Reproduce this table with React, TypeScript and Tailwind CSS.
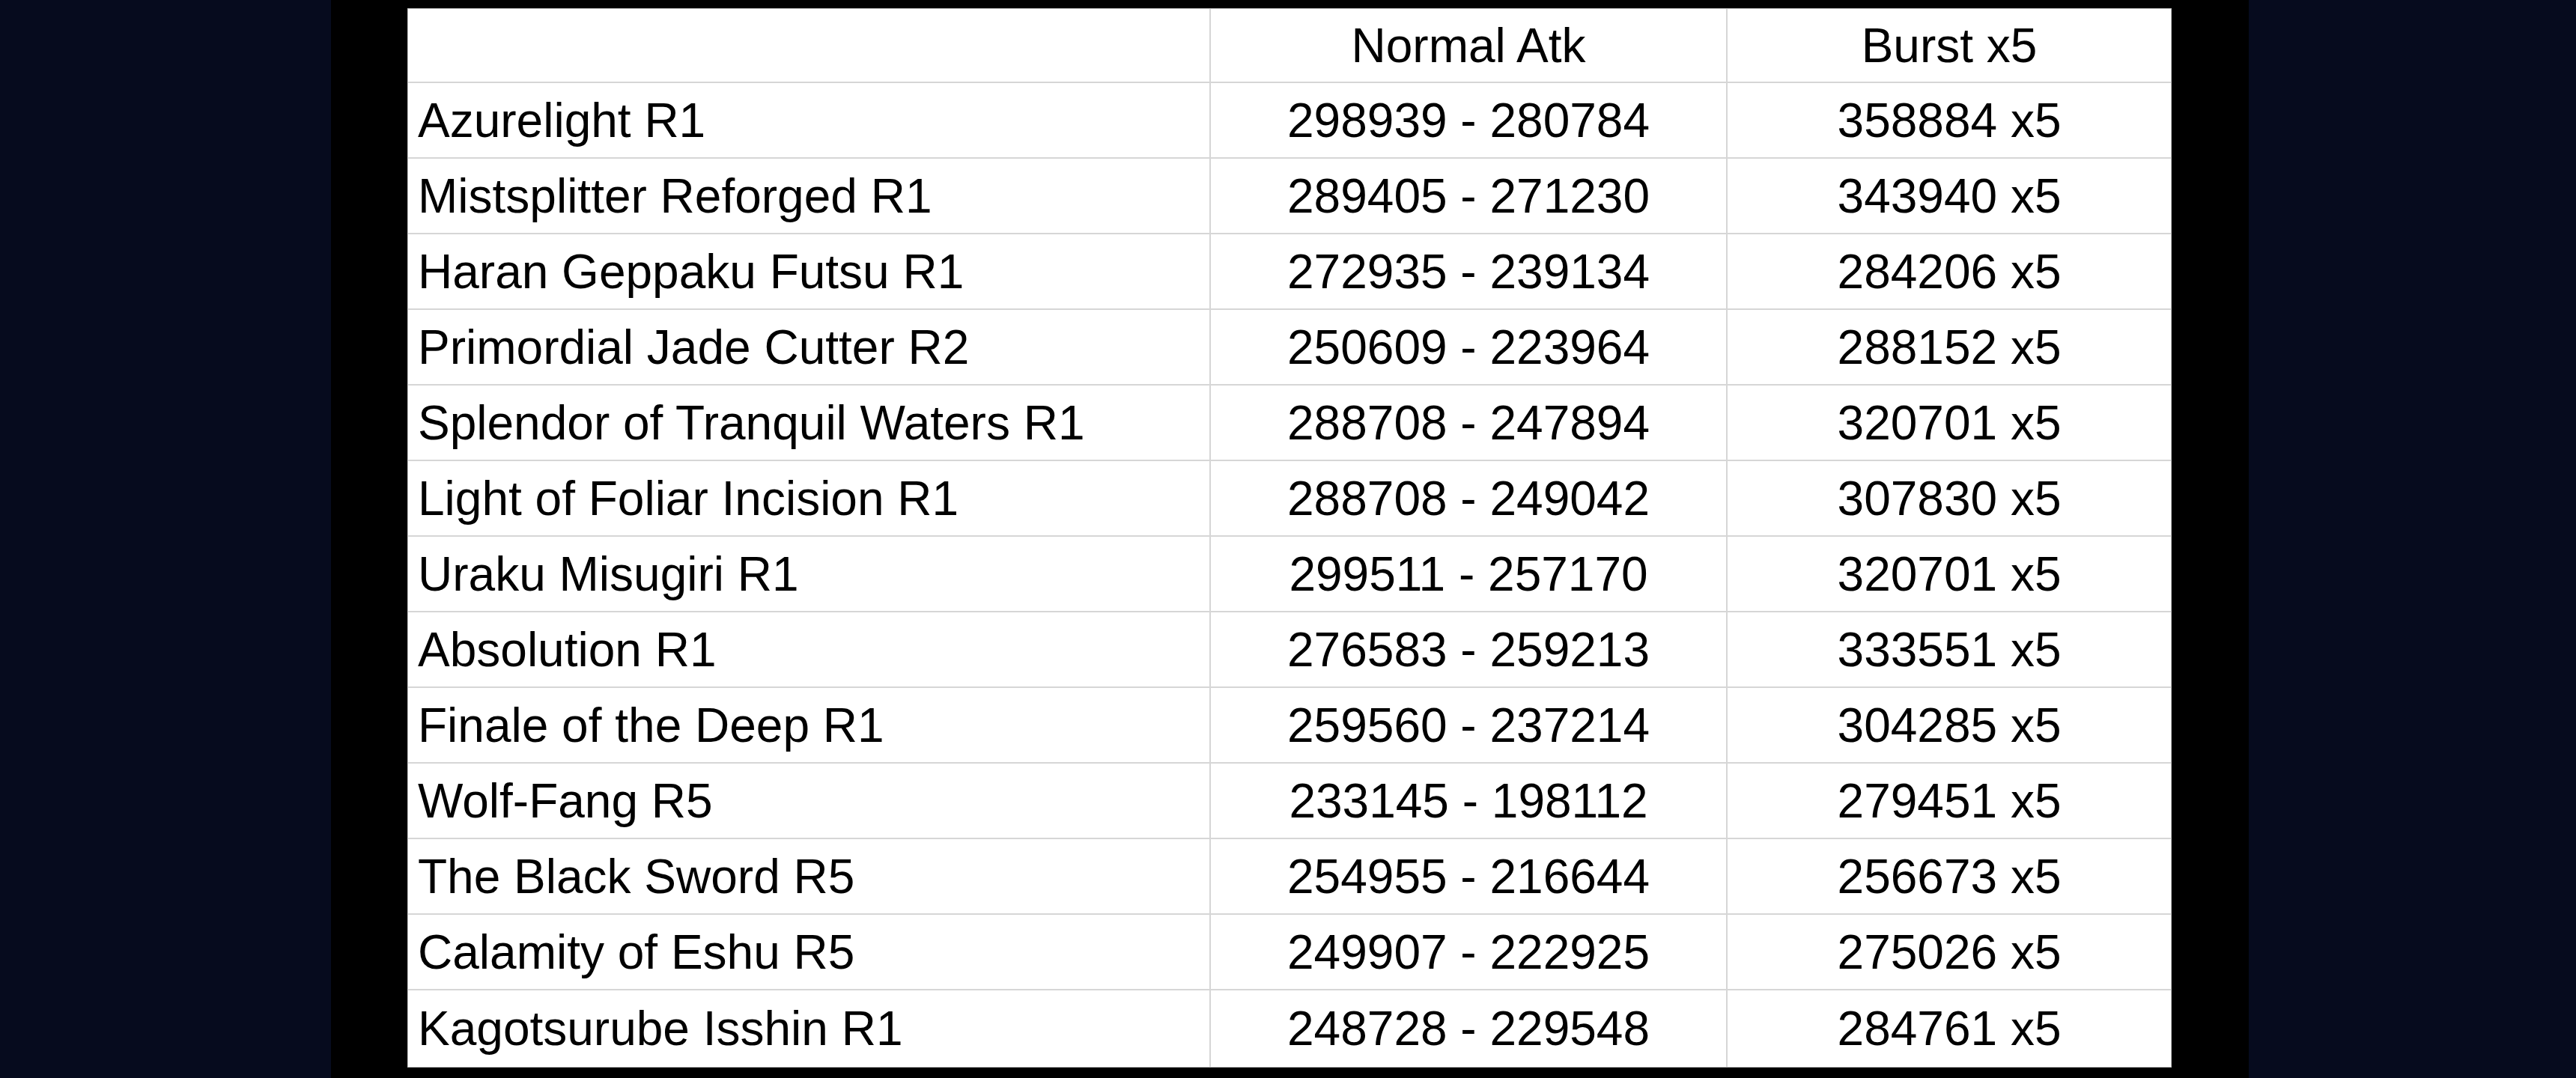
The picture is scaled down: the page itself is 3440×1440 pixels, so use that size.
import React from "react";

const rows: [string, string, string][] = [
  ["Azurelight R1", "298939 - 280784", "358884 x5"],
  ["Mistsplitter Reforged R1", "289405 - 271230", "343940 x5"],
  ["Haran Geppaku Futsu R1", "272935 - 239134", "284206 x5"],
  ["Primordial Jade Cutter R2", "250609 - 223964", "288152 x5"],
  ["Splendor of Tranquil Waters R1", "288708 - 247894", "320701 x5"],
  ["Light of Foliar Incision R1", "288708 - 249042", "307830 x5"],
  ["Uraku Misugiri R1", "299511 - 257170", "320701 x5"],
  ["Absolution R1", "276583 - 259213", "333551 x5"],
  ["Finale of the Deep R1", "259560 - 237214", "304285 x5"],
  ["Wolf-Fang R5", "233145 - 198112", "279451 x5"],
  ["The Black Sword R5", "254955 - 216644", "256673 x5"],
  ["Calamity of Eshu R5", "249907 - 222925", "275026 x5"],
  ["Kagotsurube Isshin R1", "248728 - 229548", "284761 x5"],
];

function Row({
  a,
  b,
  c,
  h,
  last,
}: {
  a: string;
  b: string;
  c: string;
  h: string;
  last?: boolean;
}) {
  return (
    <div
      className={`flex ${h} ${last ? "" : "border-b-2 border-[#d6d6d6]"}`}
    >
      <div className="w-[1072px] flex items-center pl-[13px] border-r-2 border-[#d6d6d6]">
        {a}
      </div>
      <div className="w-[690px] flex items-center justify-center border-r-2 border-[#d6d6d6]">
        {b}
      </div>
      <div className="flex-1 flex items-center justify-center">{c}</div>
    </div>
  );
}

export default function App() {
  return (
    <div className="w-[3440px] h-[1440px] bg-[#060b1e] flex overflow-hidden">
      <div className="ml-[442px] w-[2561px] h-[1440px] bg-black pt-[11px] pl-[102px]">
        <div
          className="w-[2356px] bg-white border border-[#c4c4c4] text-black text-[64px] leading-none"
          style={{ fontFamily: '"Liberation Sans", Arial, sans-serif' }}
        >
          <div className="flex h-[99px] border-b-2 border-[#d6d6d6]">
            <div className="w-[1072px] border-r-2 border-[#d6d6d6]" />
            <div className="w-[690px] flex items-center justify-center border-r-2 border-[#d6d6d6]">
              Normal Atk
            </div>
            <div className="flex-1 flex items-center justify-center">Burst x5</div>
          </div>
          {rows.map((r, i) => (
            <Row
              key={i}
              a={r[0]}
              b={r[1]}
              c={r[2]}
              h={i === rows.length - 1 ? "h-[102px]" : "h-[101px]"}
              last={i === rows.length - 1}
            />
          ))}
        </div>
      </div>
    </div>
  );
}
